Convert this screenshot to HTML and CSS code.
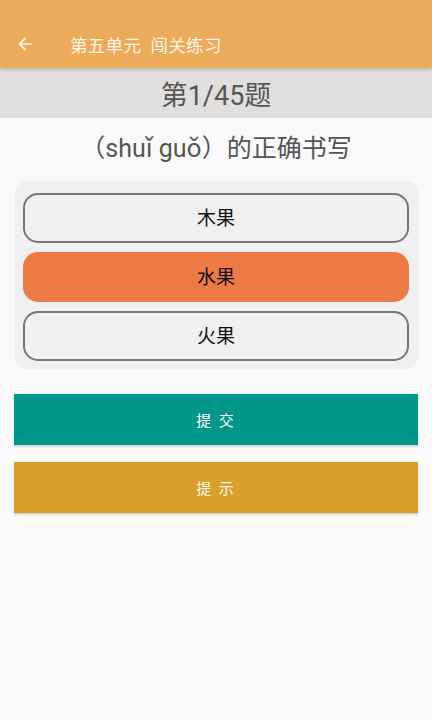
FILE: index.html
```html
<!DOCTYPE html>
<html lang="zh">
<head>
<meta charset="utf-8">
<link rel="stylesheet" href="styles.css">
</head>
<body>
<header class="appbar">
  <div class="bar-row">
    <svg class="back" viewBox="0 0 24 24" width="20" height="20"><path d="M20 11H7.83l5.59-5.59L12 4l-8 8 8 8 1.41-1.41L7.83 13H20v-2z" fill="#fff8ec"/></svg>
    <span class="title">第五单元&nbsp;&nbsp;闯关练习</span>
  </div>
</header>
<div class="counter">第1/45题</div>
<div class="question">（shuǐ guǒ）的正确书写</div>
<div class="options">
  <div class="opt">木果</div>
  <div class="opt selected">水果</div>
  <div class="opt">火果</div>
</div>
<div class="btn submit">提 交</div>
<div class="btn hint">提 示</div>
</body>
</html>
```
FILE: styles.css
```css
* { box-sizing: border-box; }
body {
  margin: 0;
  background: #fafafa;
  font-family: Roboto, "Noto Sans CJK SC", sans-serif;
  width: 432px;
  height: 720px;
  overflow: hidden;
}
.appbar {
  background: #ebab5a;
  height: 68px;
  padding-top: 20px;
  box-shadow: 0 2px 3px rgba(0,0,0,0.18);
  position: relative;
  z-index: 2;
}
.bar-row {
  height: 48px;
  display: flex;
  align-items: center;
  padding-left: 15px;
}
.back { display: block; }
.title {
  margin-left: 35px;
  color: #fff5e4;
  font-size: 17.5px;
  letter-spacing: 0.3px;
}
.counter {
  height: 50px;
  background: #e0dfdd;
  display: flex;
  align-items: center;
  justify-content: center;
  font-size: 27px;
  color: #555;
}
.question {
  padding-top: 16px;
  line-height: 30px;
  text-align: center;
  font-size: 25px;
  color: #555;
  margin-bottom: 17px;
}
.options {
  margin: 0 14px 0 15px;
  background: #f0f0f0;
  border-radius: 12px;
  padding: 12px 9px 8px 8px;
  display: flex;
  flex-direction: column;
  gap: 9px;
}
.opt {
  height: 50px;
  border: 2px solid #777;
  border-radius: 15px;
  display: flex;
  align-items: center;
  justify-content: center;
  padding-bottom: 3px;
  font-size: 19px;
  color: #111;
}
.opt.selected {
  background: #ee7b45;
  border-color: #ee7b45;
}
.btn {
  margin: 25px 14px 0 14px;
  height: 51px;
  display: flex;
  align-items: center;
  justify-content: center;
  color: #fff;
  font-size: 15px;
  letter-spacing: 2px;
  box-shadow: 0 2px 2px rgba(0,0,0,0.15);
}
.submit { background: #009688; }
.hint { background: #d99e2b; margin-top: 17px; color: #fff8ea; }
```
